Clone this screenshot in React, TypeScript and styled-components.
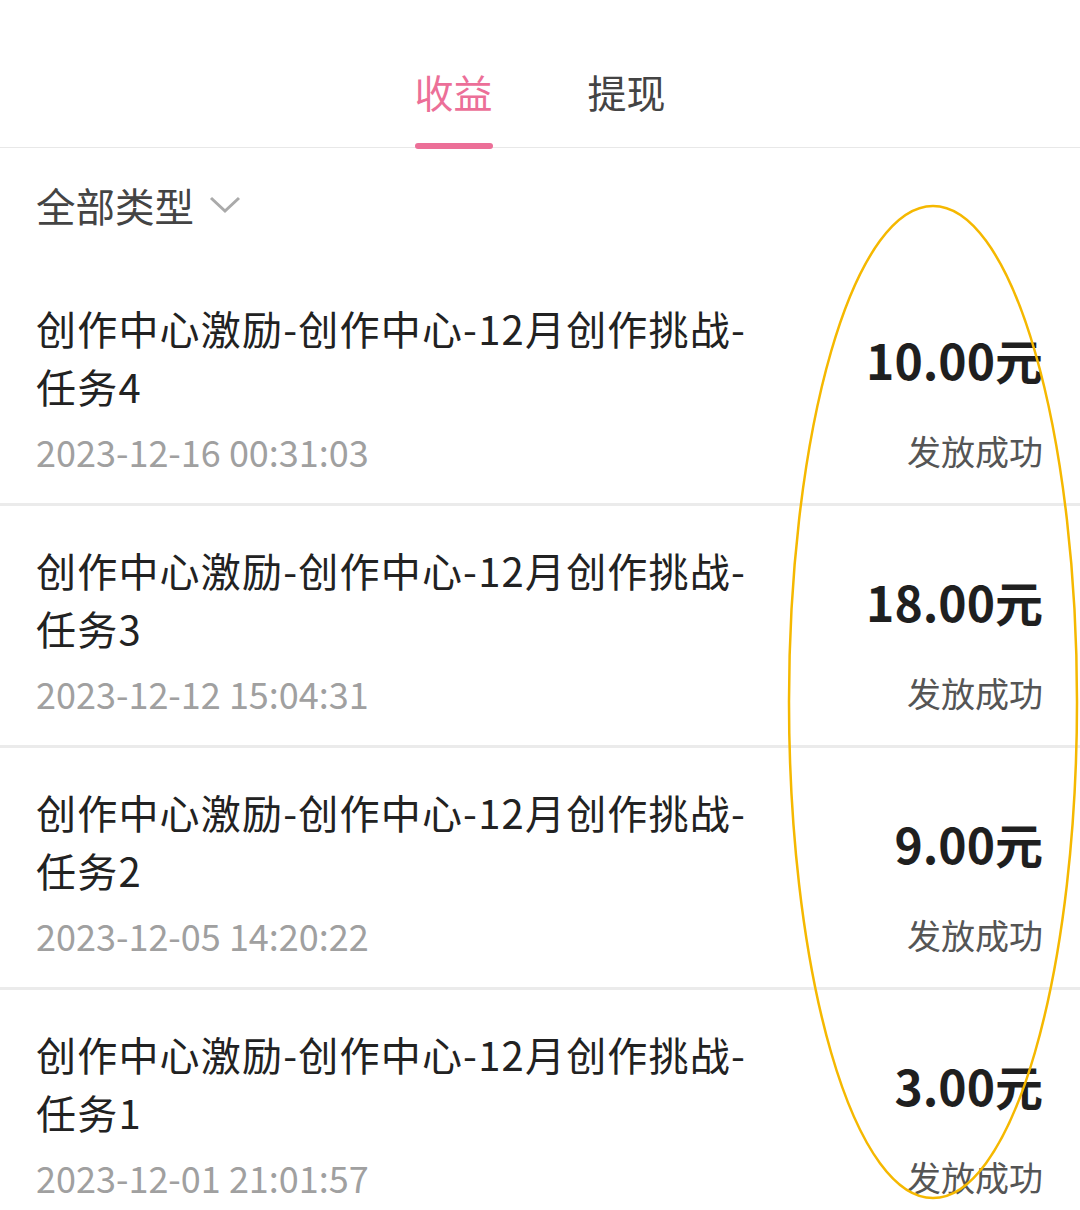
import styled, { createGlobalStyle } from 'styled-components'

const GlobalStyle = createGlobalStyle`
  html, body {
    margin: 0;
    padding: 0;
    background: #fff;
  }
  body {
    font-family: "Noto Sans CJK SC", "Noto Sans", sans-serif;
  }
`

type TRecord = {
  title: string;
  time: string;
  amount: string;
  status: string;
}

const records: Array<TRecord> = [
  { title: '创作中心激励-创作中心-12月创作挑战-任务4', time: '2023-12-16 00:31:03', amount: '10.00元', status: '发放成功' },
  { title: '创作中心激励-创作中心-12月创作挑战-任务3', time: '2023-12-12 15:04:31', amount: '18.00元', status: '发放成功' },
  { title: '创作中心激励-创作中心-12月创作挑战-任务2', time: '2023-12-05 14:20:22', amount: '9.00元', status: '发放成功' },
  { title: '创作中心激励-创作中心-12月创作挑战-任务1', time: '2023-12-01 21:01:57', amount: '3.00元', status: '发放成功' }
]

const Page = styled.div`
  position: relative;
  width: 1080px;
  height: 1210px;
  overflow: hidden;
  background: #fff;
`

const TabBar = styled.div`
  display: flex;
  justify-content: center;
  gap: 95px;
  height: 147px;
  border-bottom: 1px solid #e8e8e8;
`

const Tab = styled.div<{ $active?: boolean }>`
  position: relative;
  padding-top: 61px;
  font-size: 39px;
  line-height: 60px;
  color: ${p => (p.$active ? '#ec6f98' : '#444')};

  &::after {
    content: '';
    display: ${p => (p.$active ? 'block' : 'none')};
    position: absolute;
    left: 1px;
    right: 0;
    bottom: -2px;
    height: 6px;
    border-radius: 3px;
    background: #ec6f98;
  }
`

const Filter = styled.div`
  display: flex;
  align-items: center;
  height: 112px;
  padding: 0 36px 4px;
  font-size: 39.5px;
  color: #444;

  svg {
    margin-left: 15px;
    margin-top: 2px;
  }
`

const Row = styled.div`
  display: flex;
  justify-content: space-between;
  padding: 35px 37px 30px 36px;
  border-bottom: 3px solid #ebebeb;
`

const Left = styled.div`
  width: 740px;
`

const Title = styled.div`
  font-size: 40px;
  line-height: 58px;
  letter-spacing: 1.2px;
  color: #222;
`

const Time = styled.div`
  margin-top: 14px;
  font-size: 36px;
  line-height: 44px;
  color: #a0a0a0;
`

const Right = styled.div`
  display: flex;
  flex-direction: column;
  align-items: flex-end;
  padding-top: 30px;
`

const Amount = styled.div`
  font-size: 48px;
  line-height: 60px;
  font-weight: 600;
  color: #1f1f1f;
`

const Status = styled.div`
  margin-top: 40px;
  font-size: 34px;
  line-height: 44px;
  color: #555;
`

const Mark = styled.svg`
  position: absolute;
  left: 0;
  top: 0;
  pointer-events: none;
`

const splitTitle = (t: string) => {
  const i = t.lastIndexOf('-') + 1
  return [t.slice(0, i), t.slice(i)]
}

export default function App() {
  return (
    <Page>
      <GlobalStyle />
      <TabBar>
        <Tab $active>收益</Tab>
        <Tab>提现</Tab>
      </TabBar>
      <Filter>
        全部类型
        <svg width="32" height="18" viewBox="0 0 32 18">
          <path d="M2 2 L16 15 L30 2" fill="none" stroke="#aaa" strokeWidth="3" />
        </svg>
      </Filter>
      {records.map((r, i) => {
        const [a, b] = splitTitle(r.title)
        return (
          <Row key={i}>
            <Left>
              <Title>{a}<br />{b}</Title>
              <Time>{r.time}</Time>
            </Left>
            <Right>
              <Amount>{r.amount}</Amount>
              <Status>{r.status}</Status>
            </Right>
          </Row>
        )
      })}
      <Mark width="1080" height="1210" viewBox="0 0 1080 1210">
        <ellipse cx="933" cy="702" rx="144" ry="496" fill="none" stroke="#f5b800" strokeWidth="2.5" />
      </Mark>
    </Page>
  )
}
